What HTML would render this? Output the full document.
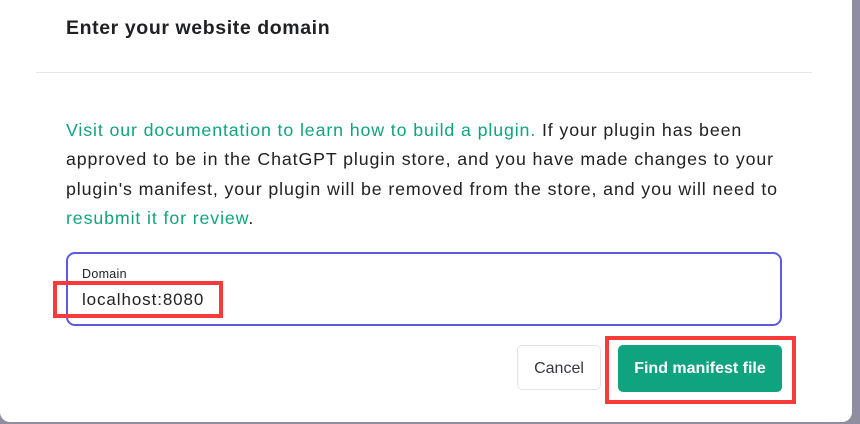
<!DOCTYPE html>
<html><head><meta charset="utf-8"><style>
html,body{margin:0;padding:0;width:860px;height:424px;overflow:hidden;background:#8e8ea0;font-family:"Liberation Sans",sans-serif;}
.modal{position:absolute;left:0;top:-10px;width:852px;height:432px;background:#fff;border-radius:0 0 10px 10px;}
.t{position:absolute;left:66px;top:27px;font-size:19.5px;font-weight:bold;color:#202123;white-space:nowrap;letter-spacing:0.6px;}
.hr{position:absolute;left:36px;top:82px;width:776px;height:1px;background:#e5e5e5;}
.p{position:absolute;left:66px;top:126px;font-size:17.8px;line-height:29.3px;color:#202123;white-space:nowrap;letter-spacing:0.88px;}
.g{color:#10a37f;}
.in{position:absolute;left:66px;top:262px;width:712px;height:70px;border:2px solid #5b5be6;border-radius:9px;}
.lab{position:absolute;left:82px;top:277px;font-size:12.5px;color:#202123;letter-spacing:0.3px;}
.val{position:absolute;left:82px;top:300px;font-size:17px;color:#202123;letter-spacing:0.9px;}
.r1{position:absolute;left:53px;top:291px;width:162px;height:29px;border:4px solid #f83a3a;}
.cancel{position:absolute;left:517px;top:355px;width:84px;height:45px;border:1px solid #e3e3e6;border-radius:5px;font-size:16px;color:#353740;text-align:center;line-height:45px;box-sizing:border-box;}
.r2{position:absolute;left:605px;top:346px;width:183px;height:60px;border:4px solid #f83a3a;}
.find{position:absolute;left:618px;top:355px;width:164px;height:47px;background:#10a37f;border-radius:5px;color:#fff;font-size:16px;font-weight:bold;text-align:center;line-height:47px;}
</style></head><body>
<div class="modal">
<div class="t">Enter your website domain</div>
<div class="hr"></div>
<div class="p"><span class="g">Visit our documentation to learn how to build a plugin.</span> If your plugin has been<br>approved to be in the ChatGPT plugin store, and you have made changes to your<br>plugin's manifest, your plugin will be removed from the store, and you will need to<br><span class="g">resubmit it for review</span>.</div>
<div class="in"></div>
<div class="lab">Domain</div>
<div class="val">localhost:8080</div>
<div class="r1"></div>
<div class="cancel">Cancel</div>
<div class="r2"></div>
<div class="find">Find manifest file</div>
</div>
</body></html>
